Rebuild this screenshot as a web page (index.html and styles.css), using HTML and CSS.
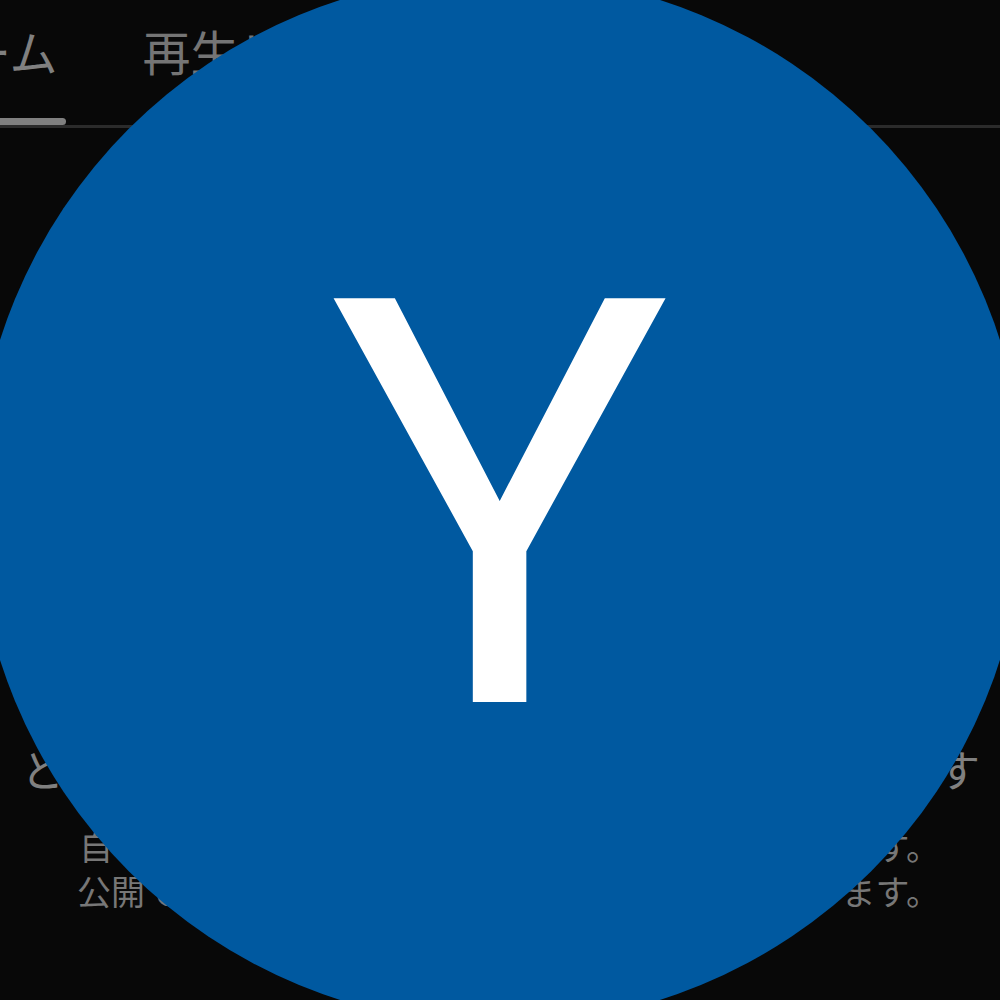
FILE: index.html
```html
<!DOCTYPE html>
<html lang="ja">
<head>
<meta charset="utf-8">
<title>チャンネル</title>
<link rel="stylesheet" href="styles.css">
</head>
<body>
<nav class="tabs">
  <div class="tab tab-active">ホーム</div>
  <div class="tab">再生リスト</div>
</nav>
<main class="empty">
  <p class="line line-title"><span>と</span><span>す</span></p>
  <p class="line line-one"><span>自</span><span>す。</span></p>
  <p class="line line-two"><span>公開で</span><span>ます。</span></p>
</main>
<div class="avatar">Y</div>
</body>
</html>
```
FILE: styles.css
```css
html, body {
  margin: 0;
  padding: 0;
  width: 1000px;
  height: 1000px;
  overflow: hidden;
  background: #080808;
  font-family: "Noto Sans CJK JP", sans-serif;
  color: #808080;
}
.tabs {
  display: flex;
  gap: 77px;
  height: 125px;
  border-bottom: 3px solid #2b2b2b;
  margin-left: -85px;
}
.tab {
  flex: none;
  font-size: 48px;
  line-height: 100px;
  white-space: nowrap;
  color: #757575;
}
.tab-active {
  position: relative;
  height: 125px;
  padding-right: 8px;
  color: #808080;
}
.tab-active::after {
  content: "";
  position: absolute;
  left: 0;
  right: 0;
  bottom: 0;
  height: 7px;
  border-radius: 4px;
  background: #808080;
}
.empty {
  padding-top: 610px;
}
.line {
  margin: 0;
  display: flex;
  justify-content: space-between;
}
.line-title {
  font-size: 43px;
  line-height: 60px;
  padding: 0 20px 0 21px;
}
.line-one, .line-two {
  font-size: 34px;
  line-height: 45px;
  color: #777;
}
.line-one {
  padding: 25px 60px 0 79px;
}
.line-two {
  padding: 0 60px 0 77px;
}
.avatar {
  position: absolute;
  left: -25px;
  top: -25px;
  width: 1050px;
  height: 1050px;
  border-radius: 50%;
  background: #0059a0;
  color: #fff;
  font-family: Roboto, sans-serif;
  font-size: 568px;
  line-height: 1067px;
  text-align: center;
}
```
